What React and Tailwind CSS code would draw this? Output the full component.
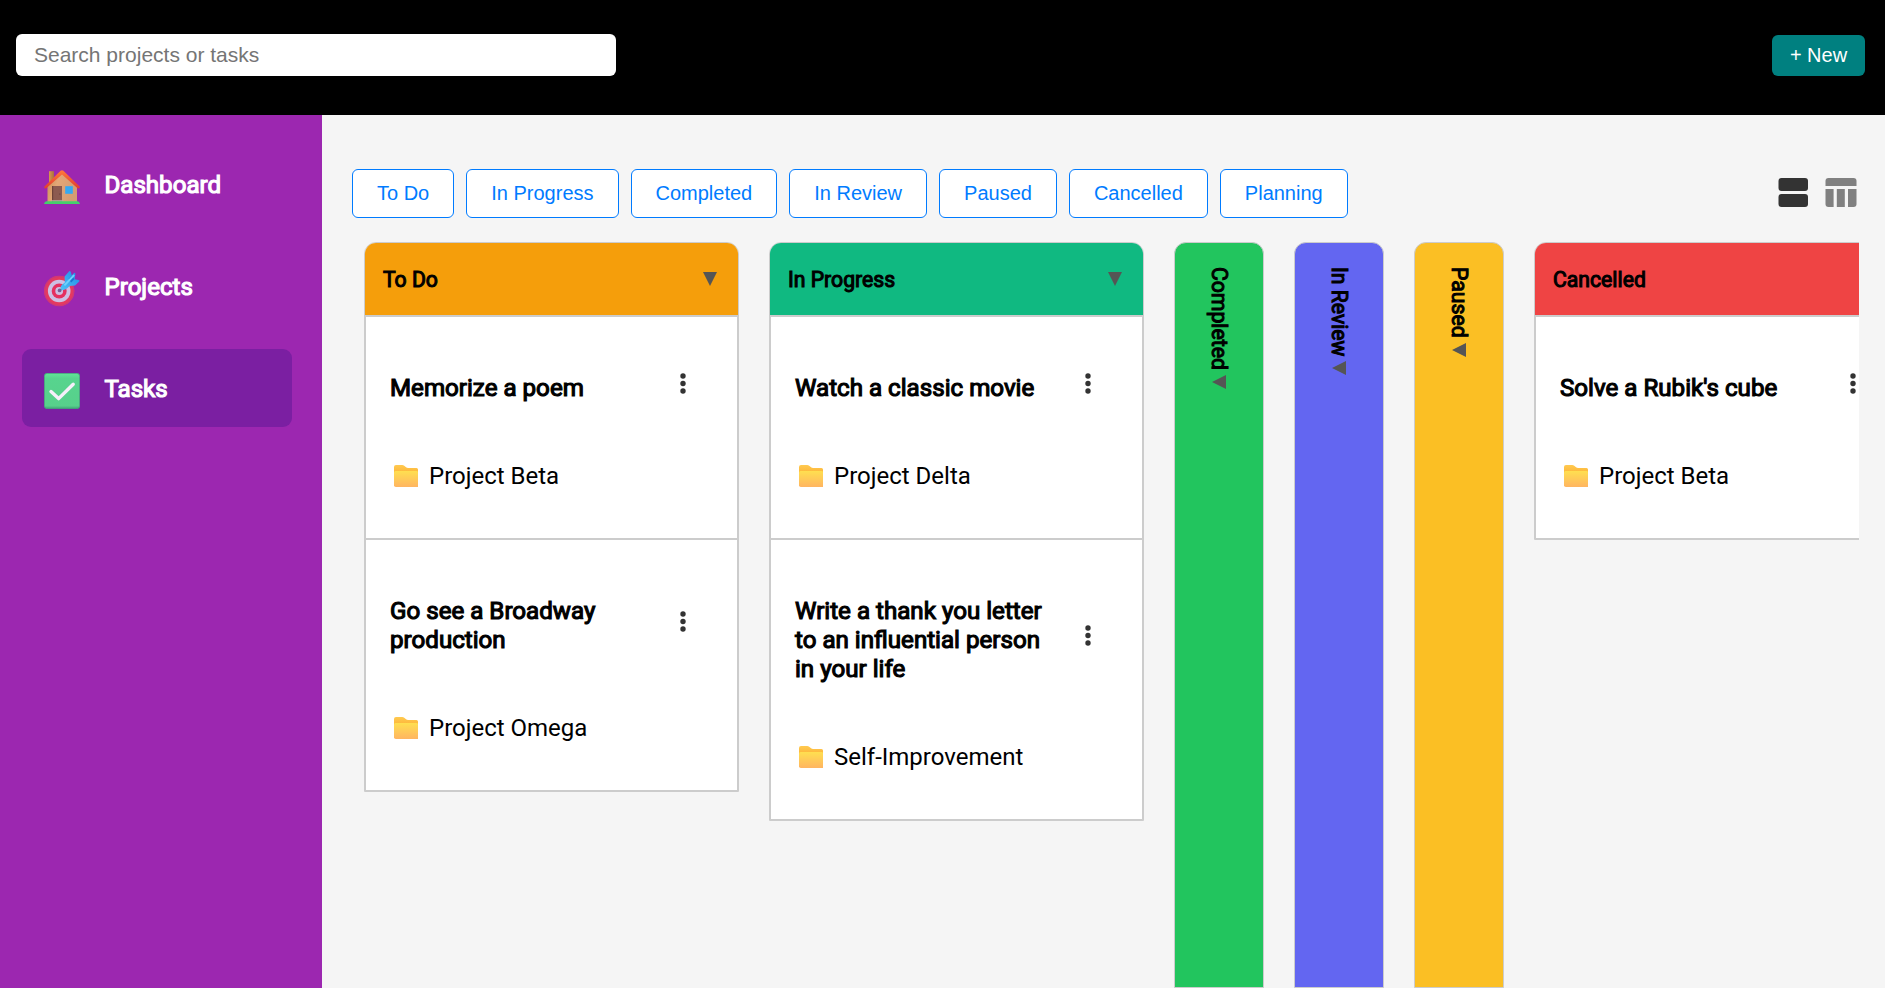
import React from "react";

const NAV = [
  { label: "Dashboard", icon: HouseIcon },
  { label: "Projects", icon: TargetIcon },
  { label: "Tasks", icon: CheckIcon, active: true },
];

const FILTERS = ["To Do", "In Progress", "Completed", "In Review", "Paused", "Cancelled", "Planning"];

const COLUMNS = [
  {
    title: "To Do",
    color: "bg-[#f59e0b]",
    tasks: [
      { title: "Memorize a poem", project: "Project Beta" },
      { title: "Go see a Broadway production", project: "Project Omega" },
    ],
  },
  {
    title: "In Progress",
    color: "bg-[#10b981]",
    tasks: [
      { title: "Watch a classic movie", project: "Project Delta" },
      { title: "Write a thank you letter to an influential person in your life", project: "Self-Improvement" },
    ],
  },
  { title: "Completed", color: "bg-[#22c55e]", collapsed: true },
  { title: "In Review", color: "bg-[#6366f1]", collapsed: true },
  { title: "Paused", color: "bg-[#fbbf24]", collapsed: true },
  {
    title: "Cancelled",
    color: "bg-[#ef4444]",
    tasks: [{ title: "Solve a Rubik's cube", project: "Project Beta" }],
  },
];

function HouseIcon() {
  return (
    <svg width="36" height="36" viewBox="0 0 36 36">
      <defs>
        <linearGradient id="wall" x1="0" y1="0" x2="1" y2="0.3">
          <stop offset="0" stopColor="#c98a52" />
          <stop offset="0.4" stopColor="#e3a777" />
          <stop offset="1" stopColor="#d59c72" />
        </linearGradient>
        <linearGradient id="roof" x1="0" y1="0" x2="0" y2="1">
          <stop offset="0" stopColor="#ff7a3c" />
          <stop offset="1" stopColor="#e23b2c" />
        </linearGradient>
        <linearGradient id="chimney" x1="0" y1="0" x2="1" y2="0">
          <stop offset="0" stopColor="#d9974f" />
          <stop offset="1" stopColor="#a9703c" />
        </linearGradient>
      </defs>
      <rect x="5" y="2.2" width="5" height="12" fill="url(#chimney)" />
      <path d="M3.5 17.5 L18 4 L33 17.5 V33 H3.5 Z" fill="url(#wall)" />
      <rect x="8" y="17" width="10" height="15.5" fill="#8c5a50" />
      <rect x="8" y="17" width="1.2" height="15.5" fill="#6d4238" />
      <circle cx="15.8" cy="25" r="0.6" fill="#5b3832" />
      <rect x="7.5" y="31.2" width="12" height="1.3" fill="#b9a9a4" />
      <rect x="21.2" y="17.2" width="7.6" height="7.6" fill="#35a9f2" />
      <path d="M16.6 1.8 Q18 0.5 19.4 1.8 L35.6 17.6 Q36.2 18.6 35.2 19.3 Q34.4 19.8 33.6 19.2 L18 5.4 L2.2 19.2 Q1.4 19.8 0.7 19.2 Q-0.2 18.4 0.5 17.5 Z" fill="url(#roof)" />
      <path d="M0 35 Q0.6 32.3 2.4 32.3 H33.6 Q35.4 32.3 36 35 Z" fill="#44cf6c" />
    </svg>
  );
}

function TargetIcon() {
  return (
    <svg width="36" height="36" viewBox="0 0 36 36">
      <defs>
        <linearGradient id="feather" x1="0" y1="1" x2="1" y2="0">
          <stop offset="0" stopColor="#4fc3f7" />
          <stop offset="1" stopColor="#1e88e5" />
        </linearGradient>
      </defs>
      <circle cx="15.2" cy="20" r="15.2" fill="#e5395f" />
      <circle cx="15.2" cy="20" r="14.6" fill="none" stroke="#c8387f" strokeWidth="1" />
      <circle cx="15.2" cy="20" r="11.3" fill="#cdbfe3" />
      <circle cx="15.2" cy="20" r="7.5" fill="#e5305f" />
      <circle cx="15.2" cy="20" r="3.9" fill="#cdbfe3" />
      <circle cx="15.6" cy="19.4" r="1.9" fill="#7d5f96" />
      <path d="M16 19.4 L23 12" stroke="#5a6d9c" strokeWidth="1.4" />
      <path d="M16.6 16.2 Q17.2 13.6 20.8 11.4 L20.6 5.6 L25.2 0.2 Q26.4 -0.2 26.8 1 L27.8 4.4 L30 2 Q31.6 1.4 31.4 3.4 L30.6 8.2 L34.4 9 Q36 9.4 35.2 10.6 L31 14.6 L25.6 15 Q22 19 18.6 19.2 Q16.4 18.6 16.6 16.2 Z" fill="url(#feather)" />
      <path d="M24.6 8 L28 4.6 L30.4 8.2 L27.2 11.4 Z" fill="#1976d2" />
      <path d="M21 13.8 L29.6 4.6" stroke="#6fd0fb" strokeWidth="2" strokeLinecap="round" />
    </svg>
  );
}

function CheckIcon() {
  return (
    <svg width="36" height="36" viewBox="0 0 36 36">
      <defs>
        <linearGradient id="box" x1="0" y1="0" x2="0" y2="1">
          <stop offset="0" stopColor="#62e597" />
          <stop offset="0.15" stopColor="#57d48e" />
          <stop offset="0.92" stopColor="#57d08b" />
          <stop offset="1" stopColor="#3fa277" />
        </linearGradient>
      </defs>
      <rect x="0.3" y="0.3" width="35.4" height="35.4" rx="3" fill="url(#box)" stroke="#41a77a" strokeWidth="0.8" />
      <path d="M7 18.6 L14.6 25.6 L29.2 11.2" fill="none" stroke="#f6effa" strokeWidth="3.4" strokeLinecap="round" strokeLinejoin="round" />
    </svg>
  );
}

function FolderIcon() {
  return (
    <svg width="24" height="22" viewBox="0 0 24 22" className="block">
      <defs>
        <linearGradient id="folder" x1="0" y1="0" x2="0" y2="1">
          <stop offset="0" stopColor="#ffdf50" />
          <stop offset="1" stopColor="#ffb561" />
        </linearGradient>
        <linearGradient id="tab" x1="0" y1="0" x2="0" y2="1">
          <stop offset="0" stopColor="#ffca50" />
          <stop offset="1" stopColor="#fdb235" />
        </linearGradient>
      </defs>
      <path d="M0 2 Q0 0 2 0 H8.2 Q9.4 0 10.2 0.7 L12.4 2.6 Q13 3 14 3 H22.5 Q24 3 24 4.5 V9 H0 Z" fill="url(#tab)" />
      <path d="M0 7.5 Q0 6 1.5 6 H22.5 Q24 6 24 7 V22 H1.8 Q0 22 0 20.2 Z" fill="url(#folder)" />
    </svg>
  );
}

function DotsIcon() {
  return (
    <svg width="6" height="21" viewBox="0 0 6 21" fill="#333333">
      <circle cx="3" cy="3" r="2.7" />
      <circle cx="3" cy="10.5" r="2.7" />
      <circle cx="3" cy="18" r="2.7" />
    </svg>
  );
}

function ListViewIcon() {
  return (
    <svg width="30" height="29" viewBox="0 0 30 29" fill="#333333">
      <rect x="0.5" width="29.5" height="13" rx="3" />
      <rect x="0.5" y="16" width="29.5" height="13" rx="3" />
    </svg>
  );
}

function TableViewIcon() {
  return (
    <svg width="32" height="29" viewBox="0 0 32 29" fill="#808080">
      <path d="M0.5 8 V3 Q0.5 0 3.5 0 H28.5 Q31.5 0 31.5 3 V8 Z" />
      <path d="M0.5 11 H8.6 V29 H3.5 Q0.5 29 0.5 26 Z" />
      <rect x="11.8" y="11" width="8" height="18" />
      <path d="M23 11 H31.5 V26 Q31.5 29 28.5 29 H23 Z" />
    </svg>
  );
}

function TaskCard({ title, project }) {
  return (
    <div className="border border-[#cccccc] bg-white pt-[57px] pr-[51px] pb-[48px] pl-6">
      <div className="flex items-center justify-between">
        <h3 className="w-[256px] text-[24.15px] leading-[29px] text-black [-webkit-text-stroke:1.15px_black]">{title}</h3>
        <button className="-mt-px mb-[9px]" aria-label="Task menu">
          <DotsIcon />
        </button>
      </div>
      <div className="mt-[59px] flex h-[28px] items-center gap-[11px] pl-[4px]">
        <FolderIcon />
        <span className="text-2xl leading-[28px] text-black">{project}</span>
      </div>
    </div>
  );
}

function Column({ title, color, tasks }) {
  return (
    <section className="w-[375px] shrink-0 self-start overflow-hidden rounded-t-[12px] border border-[#cccccc] bg-white">
      <header className={`flex h-[73px] items-center justify-between border-b border-[#cccccc] pr-[21px] pl-[18px] ${color}`}>
        <h2 className="pt-px text-[21.2px] leading-6 text-black [-webkit-text-stroke:1.05px_black]">{title}</h2>
        <svg width="14" height="14" viewBox="0 0 14 14" fill="#555555">
          <path d="M0 0 H14 L7 14 Z" />
        </svg>
      </header>
      {tasks.map((t) => (
        <TaskCard key={t.title} {...t} />
      ))}
    </section>
  );
}

function CollapsedColumn({ title, color }) {
  return (
    <section className={`flex w-[90px] shrink-0 flex-col items-center rounded-t-[12px] border border-[#cccccc] pt-6 ${color}`}>
      <h2 className="text-[21.2px] leading-6 text-black [writing-mode:vertical-rl] [-webkit-text-stroke:1.05px_black]">{title}</h2>
      <svg width="14" height="14" viewBox="0 0 14 14" fill="#555555" className="mt-[5px]">
        <path d="M14 0 V14 L0 7 Z" />
      </svg>
    </section>
  );
}

export default function App() {
  return (
    <div className="flex h-screen w-full flex-col overflow-hidden bg-[#f5f5f5] font-['Roboto',sans-serif]">
      <header className="flex h-[115px] shrink-0 items-start justify-between bg-black pt-[34px] pr-5 pl-4">
        <input
          type="text"
          placeholder="Search projects or tasks"
          className="h-[42px] w-[600px] rounded-[6px] bg-white px-[18px] font-['Liberation_Sans',sans-serif] text-[21px] placeholder:text-[#757575]"
        />
        <button className="mt-px h-[41px] w-[93px] rounded-[6px] bg-[#008080] pb-[2px] font-['Liberation_Sans',sans-serif] text-xl text-white">
          + New
        </button>
      </header>
      <div className="flex min-h-0 flex-1">
        <aside className="w-[322px] shrink-0 bg-[#9c27b0] pt-[30px] pr-[30px] pl-[22px]">
          <nav className="flex flex-col gap-6">
            {NAV.map(({ label, icon: Icon, active }) => (
              <a
                key={label}
                className={`flex h-[78px] items-center gap-6 rounded-[9px] pt-px pl-[22px] ${active ? "bg-[#7b1fa2]" : ""}`}
              >
                <span className="mt-[4px]">
                  <Icon />
                </span>
                <span className="pt-px pl-[0.5px] text-[24.1px] leading-7 text-white [-webkit-text-stroke:1.15px_white]">{label}</span>
              </a>
            ))}
          </nav>
        </aside>
        <main className="flex min-w-0 flex-1 flex-col pt-[54px] pr-[26px] pl-[30px]">
          <div className="flex items-start justify-between">
            <div className="flex gap-3">
              {FILTERS.map((f) => (
                <button
                  key={f}
                  className="h-[49px] rounded-[6px] border border-[#007bff] bg-white px-6 pb-[2px] font-['Liberation_Sans',sans-serif] text-xl text-[#007bff]"
                >
                  {f}
                </button>
              ))}
            </div>
            <div className="mt-[9px] flex gap-[17px] pr-[2px]">
              <ListViewIcon />
              <TableViewIcon />
            </div>
          </div>
          <div className="mt-6 flex min-h-0 flex-1 gap-[30px] overflow-hidden pl-3">
            {COLUMNS.map((c) => (c.collapsed ? <CollapsedColumn key={c.title} {...c} /> : <Column key={c.title} {...c} />))}
          </div>
        </main>
      </div>
    </div>
  );
}
